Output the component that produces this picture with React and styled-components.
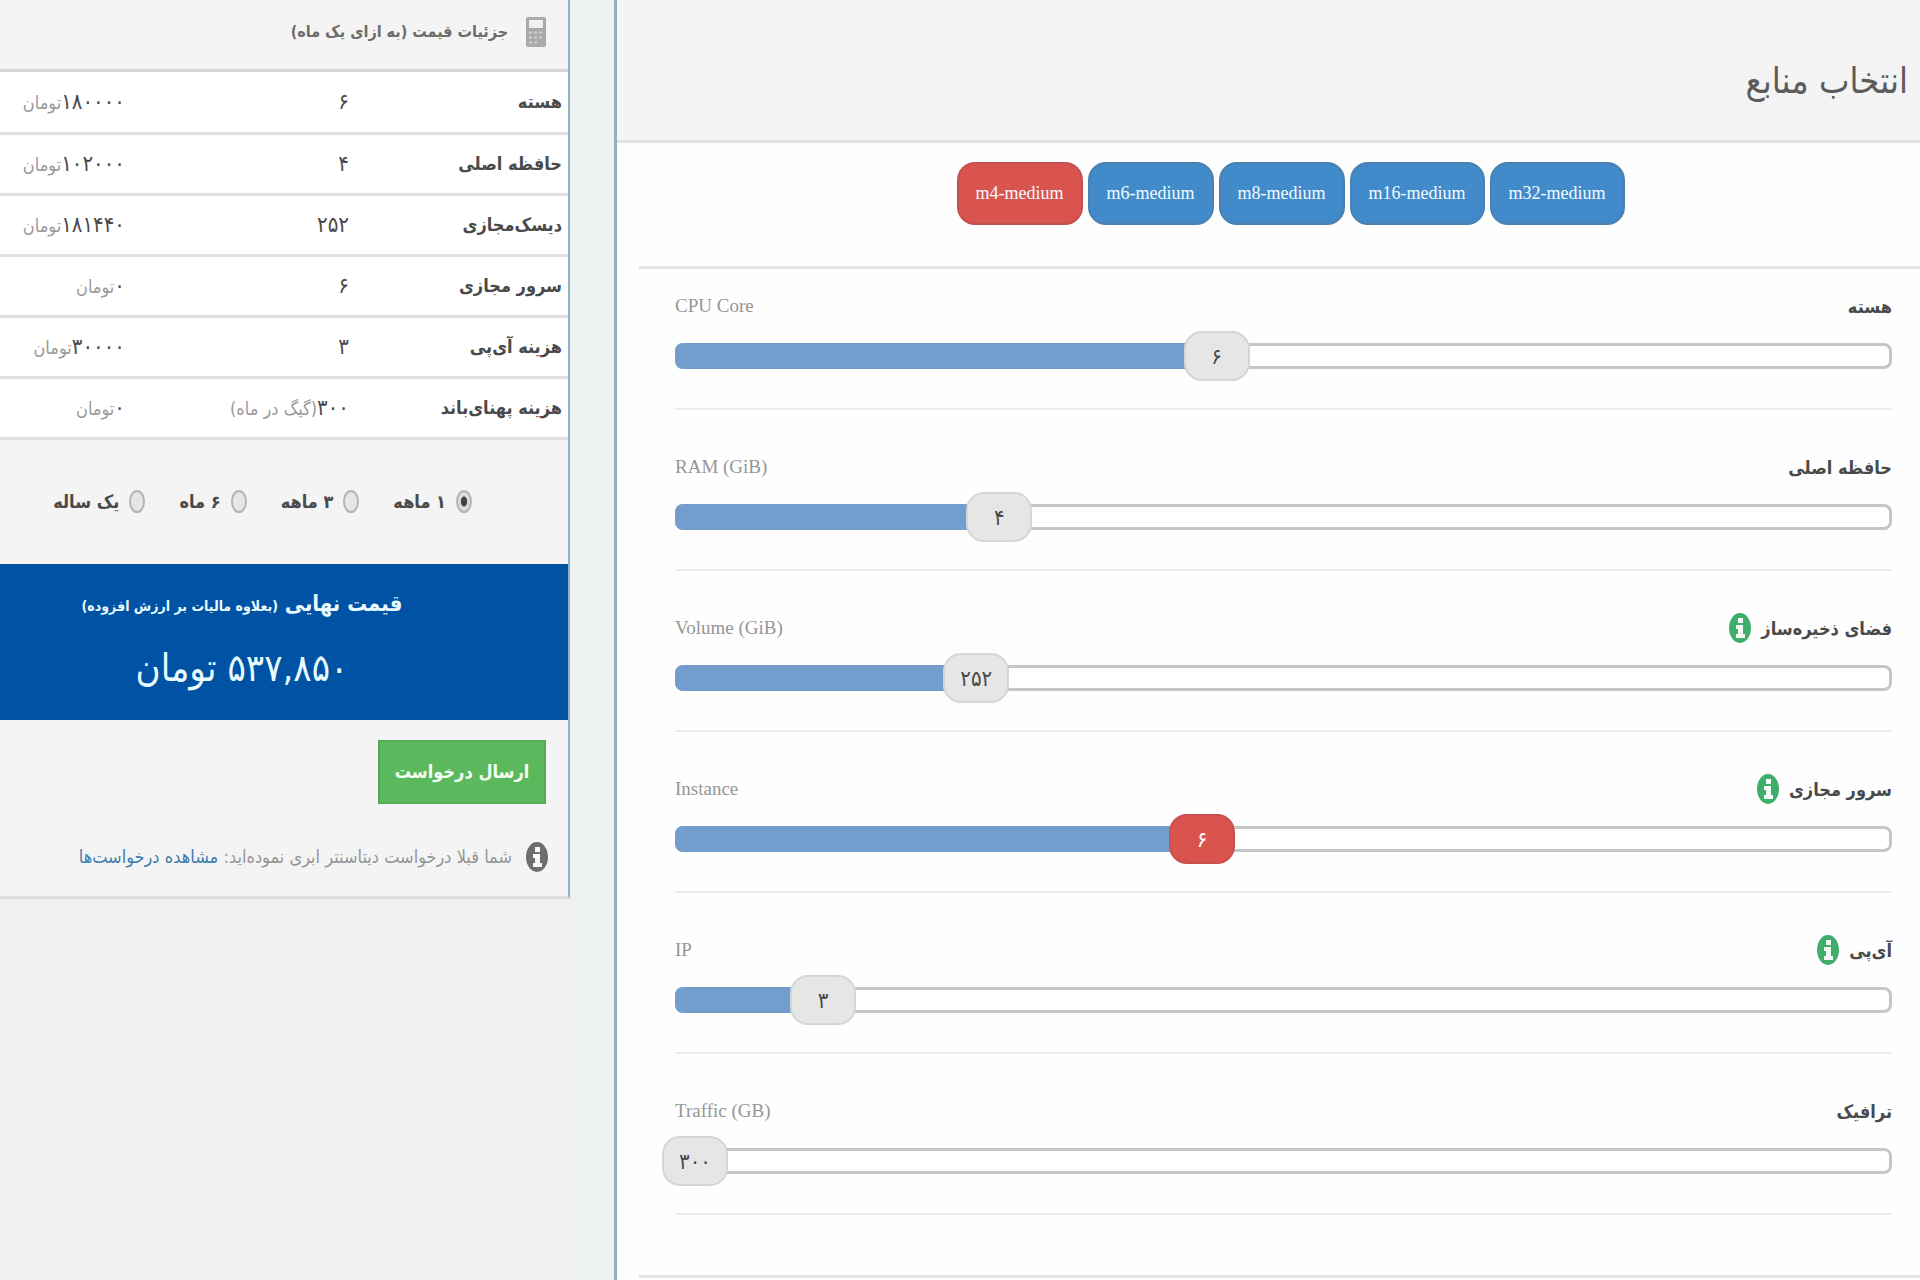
import React, { useState } from "react";
import styled, { createGlobalStyle } from "styled-components";

const GlobalStyle = createGlobalStyle`
  * {
    box-sizing: border-box;
  }

  body {
    margin: 0;
    background: #f0f0f0;
    color: #4a4a4a;
    font-family: "DejaVu Sans Condensed", "DejaVu Sans", sans-serif;
    font-size: 18px;
  }

  button,
  input {
    font: inherit;
  }
`;

const Page = styled.div`
  display: grid;
  grid-template-columns: 570px minmax(0, 1fr);
  column-gap: 44px;
  align-items: start;
  min-height: 100vh;
  background: linear-gradient(to right, #f0f0f0 570px, #edf1f2 570px);
`;

const Sidebar = styled.aside`
  background: #f4f4f4;
  border-right: 2px solid #8fb1c4;
  border-bottom: 3px solid #dcdcdc;
`;

const SidebarTitle = styled.h2`
  display: flex;
  align-items: center;
  gap: 18px;
  height: 72px;
  margin: 0;
  padding: 0 22px 6px;
  border-bottom: 3px solid #d4d4d4;
  color: #6c6c6c;
  font-size: 16px;
  font-weight: 700;
`;

const PriceTable = styled.table`
  width: 100%;
  table-layout: fixed;
  border-collapse: collapse;
  background: #fff;
`;

const PriceRow = styled.tr`
  height: 61px;
  border-bottom: 3px solid #dfdfdf;
`;

const RowName = styled.th`
  width: 219px;
  padding: 0 6px 0 0;
  text-align: right;
  font-weight: 700;
  white-space: nowrap;
`;

const Cell = styled.td`
  width: ${({ $width }) => $width};
  padding: 0;
  text-align: right;
  font-size: 22px;
  white-space: nowrap;
`;

const Unit = styled.span`
  color: #9a9a9a;
  font-size: 18px;
`;

const Periods = styled.fieldset`
  display: flex;
  align-items: center;
  gap: 34px;
  height: 124px;
  margin: 0;
  padding: 0 96px 0 0;
  border: 0;
`;

const Period = styled.label`
  display: flex;
  align-items: center;
  gap: 10px;
  font-weight: 700;
  white-space: nowrap;
`;

const Radio = styled.input`
  appearance: none;
  width: 16px;
  height: 23px;
  margin: 0;
  border: 2px solid #b4b4b4;
  border-radius: 50%;
  background: #e6e6e6;

  &:checked {
    background: radial-gradient(ellipse, #444 32%, #dcdcdc 42%);
  }
`;

const Total = styled.div`
  display: flex;
  flex-direction: column;
  align-items: center;
  gap: 16px;
  height: 156px;
  padding: 22px 84px 0 0;
  background: #0052a4;
  color: #e9fbff;
`;

const TotalCaption = styled.div`
  font-size: 22px;
  line-height: 36px;
  font-weight: 700;
  white-space: nowrap;
`;

const Small = styled.span`
  font-size: 14px;
`;

const Amount = styled.div`
  font-size: 38px;
  line-height: 56px;
  white-space: nowrap;
`;

const Actions = styled.div`
  padding: 20px 22px 0;
`;

const SubmitButton = styled.button`
  width: 168px;
  height: 64px;
  padding: 0;
  border: 2px solid #57a957;
  background: #5cb85c;
  color: #f4fff4;
  font-size: 18px;
  font-weight: 700;
`;

const Notice = styled.p`
  display: flex;
  align-items: center;
  gap: 14px;
  height: 92px;
  margin: 0;
  padding: 14px 20px 0;
  color: #969696;
  font-size: 18px;
  white-space: nowrap;
`;

const NoticeLink = styled.a`
  color: #3f7fae;
  text-decoration: none;
`;

const Main = styled.main`
  min-height: 100vh;
  border-left: 3px solid #8fb0ba;
  background: #fefefe;
`;

const MainHeader = styled.header`
  display: flex;
  align-items: center;
  height: 143px;
  padding: 20px 12px 0;
  border-bottom: 3px solid #e2e2e2;
  background: #f4f4f4;
`;

const MainTitle = styled.h1`
  margin: 0;
  color: #5c5c5c;
  font-size: 36px;
  font-weight: 400;
`;

const Flavors = styled.div`
  display: flex;
  justify-content: center;
  gap: 5px;
  height: 126px;
  margin-left: 22px;
  padding: 19px 0 0 22px;
  border-bottom: 3px solid #e4e4e4;
`;

const FlavorButton = styled.button`
  height: 63px;
  padding: 0 17px;
  border: 2px solid ${({ $active }) => ($active ? "#c2514f" : "#4a81b0")};
  border-radius: 18px;
  background: ${({ $active }) => ($active ? "#d9534f" : "#428bca")};
  color: #f2fbff;
  font-family: "Liberation Serif", serif;
  font-size: 18px;
`;

const Resources = styled.div`
  display: grid;
  gap: 20px;
  margin-left: 22px;
  padding: 0 28px 60px 36px;
  border-bottom: 3px solid #e4e4e4;
`;

const Resource = styled.div`
  height: 141px;
  padding-top: 19px;
  border-bottom: 2px solid #ececec;
`;

const ResourceHead = styled.div`
  display: flex;
  justify-content: space-between;
  align-items: center;
  height: 36px;
`;

const ResourceName = styled.label`
  display: flex;
  align-items: center;
  gap: 10px;
  font-weight: 700;
`;

const ResourceUnit = styled.span`
  color: #969696;
  font-family: "Liberation Serif", serif;
  font-size: 19px;
`;

const Slider = styled.div`
  display: grid;
  align-items: center;
  height: 50px;
  margin-top: 7px;
  direction: ltr;

  & > * {
    grid-area: 1 / 1;
  }
`;

const Range = styled.input`
  appearance: none;
  width: 100%;
  height: 26px;
  margin: 0;
  border: 3px solid #c6c6c6;
  border-radius: 8px;
  background: #fff;

  &::-webkit-slider-thumb {
    appearance: none;
    width: 66px;
    height: 50px;
    opacity: 0;
  }
`;

const Fill = styled.div`
  height: 26px;
  border-radius: 8px 0 0 8px;
  background: #739dcc;
  pointer-events: none;
`;

const Handle = styled.output`
  display: flex;
  justify-content: center;
  align-items: center;
  width: 66px;
  height: 50px;
  border: 2px solid ${({ $active }) => ($active ? "#c9504d" : "#d6d6d6")};
  border-radius: 18px;
  background: ${({ $active }) => ($active ? "#d9534f" : "#e6e6e6")};
  color: ${({ $active }) => ($active ? "#fff" : "#4a4a4a")};
  font-size: 22px;
  pointer-events: none;
`;

const toPersian = value => String(value).replace(/\d/g, d => "۰۱۲۳۴۵۶۷۸۹"[d]);

const prices = [
  { name: "هسته", count: 6, price: 180000 },
  { name: "حافظه اصلی", count: 4, price: 102000 },
  { name: "دیسک‌مجازی", count: 252, price: 181440 },
  { name: "سرور مجازی", count: 6, price: 0 },
  { name: "هزینه آی‌پی", count: 3, price: 30000 },
  { name: "هزینه پهنای‌باند", count: 300, note: "(گیگ در ماه)", price: 0 }
];

const periods = ["۱ ماهه", "۳ ماهه", "۶ ماه", "یک ساله"];

const flavors = ["m4-medium", "m6-medium", "m8-medium", "m16-medium", "m32-medium"];

const resources = [
  { id: "cpu", name: "هسته", unit: "CPU Core", min: 0, max: 14, value: 6 },
  { id: "ram", name: "حافظه اصلی", unit: "RAM (GiB)", min: 1, max: 13, value: 4 },
  { id: "volume", name: "فضای ذخیره‌ساز", unit: "Volume (GiB)", min: 20, max: 1024, value: 252, info: true },
  { id: "instance", name: "سرور مجازی", unit: "Instance", min: 1, max: 13, value: 6, info: true, active: true },
  { id: "ip", name: "آی‌پی", unit: "IP", min: 1, max: 20, value: 3, info: true },
  { id: "traffic", name: "ترافیک", unit: "Traffic (GB)", min: 300, max: 5000, value: 300 }
];

const InfoIcon = ({ color }) => (
  <svg width="22" height="30" viewBox="0 0 22 30" aria-hidden="true">
    <ellipse cx="11" cy="15" rx="11" ry="15" fill={color} />
    <path d="M9 5h5v5H9zM7 12h7v9h2v4H7v-4h2v-5H7z" fill="#f4fbf6" />
  </svg>
);

const CalculatorIcon = () => (
  <svg width="20" height="30" viewBox="0 0 20 30" aria-hidden="true">
    <rect width="20" height="30" rx="2" fill="#a9a9a9" />
    <rect x="3" y="3" width="14" height="8" fill="#f0f0f0" />
    <path
      d="M3 15.500h14M3 20.500h14M3 25.500h9"
      stroke="#cfcfcf"
      strokeWidth="2"
      strokeDasharray="3 2"
    />
  </svg>
);

const ResourceSlider = ({ id, name, unit, min, max, value, info, active }) => {
  const [current, setCurrent] = useState(value);
  const percent = ((current - min) / (max - min)) * 100;

  return (
    <Resource>
      <ResourceHead>
        <ResourceName htmlFor={id}>
          {name}
          {info && <InfoIcon color="#3fae6b" />}
        </ResourceName>
        <ResourceUnit dir="ltr">{unit}</ResourceUnit>
      </ResourceHead>
      <Slider>
        <Range
          id={id}
          type="range"
          min={min}
          max={max}
          value={current}
          onChange={e => setCurrent(Number(e.target.value))}
        />
        <Fill style={{ width: `${percent}%` }} />
        <Handle
          htmlFor={id}
          $active={active}
          style={{ marginLeft: `calc(${percent}% - 13px)` }}
        >
          {toPersian(current)}
        </Handle>
      </Slider>
    </Resource>
  );
};

const App = () => {
  const [period, setPeriod] = useState(periods[0]);
  const [flavor, setFlavor] = useState(flavors[0]);

  return (
    <>
      <GlobalStyle />
      <Page>
        <Sidebar dir="rtl">
          <SidebarTitle>
            <CalculatorIcon />
            جزئیات قیمت (به ازای یک ماه)
          </SidebarTitle>
          <PriceTable>
            <tbody>
              {prices.map(({ name, count, note, price }) => (
                <PriceRow key={name}>
                  <RowName scope="row">{name}</RowName>
                  <Cell $width="224px">
                    {toPersian(count)}
                    {note && <Unit>{note}</Unit>}
                  </Cell>
                  <Cell $width="auto">
                    {toPersian(price)}
                    <Unit>تومان</Unit>
                  </Cell>
                </PriceRow>
              ))}
            </tbody>
          </PriceTable>
          <Periods>
            {periods.map(name => (
              <Period key={name}>
                <Radio
                  type="radio"
                  name="period"
                  checked={name === period}
                  onChange={() => setPeriod(name)}
                />
                {name}
              </Period>
            ))}
          </Periods>
          <Total>
            <TotalCaption>
              قیمت نهایی <Small>(بعلاوه مالیات بر ارزش افزوده)</Small>
            </TotalCaption>
            <Amount>۵۳۷,۸۵۰ تومان</Amount>
          </Total>
          <Actions>
            <SubmitButton type="button">ارسال درخواست</SubmitButton>
          </Actions>
          <Notice>
            <InfoIcon color="#6e6e6e" />
            <span>
              شما قبلا درخواست دیتاسنتر ابری نموده‌اید:{" "}
              <NoticeLink href="#requests">مشاهده درخواست‌ها</NoticeLink>
            </span>
          </Notice>
        </Sidebar>
        <Main>
          <MainHeader dir="rtl">
            <MainTitle>انتخاب منابع</MainTitle>
          </MainHeader>
          <Flavors>
            {flavors.map(name => (
              <FlavorButton
                key={name}
                type="button"
                $active={name === flavor}
                onClick={() => setFlavor(name)}
              >
                {name}
              </FlavorButton>
            ))}
          </Flavors>
          <Resources dir="rtl">
            {resources.map(item => (
              <ResourceSlider key={item.id} {...item} />
            ))}
          </Resources>
        </Main>
      </Page>
    </>
  );
};

export default App;
